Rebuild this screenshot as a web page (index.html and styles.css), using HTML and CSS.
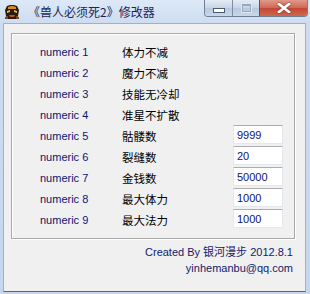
FILE: index.html
```html
<!DOCTYPE html>
<html lang="zh-CN">
<head>
    <meta charset="UTF-8">
    <meta name="viewport" content="width=device-width, initial-scale=1.0">
    <title>《兽人必须死2》修改器</title>
    <link rel="stylesheet" href="styles.css">
</head>
<body>
    <div class="window">
        <div class="titlebar">
            <svg class="app-icon" width="16" height="16" viewBox="0 0 16 16">
                <path d="M3 2 L6 1 L10 1 L13 2 L15 6 L14 12 L12 15 L4 15 L2 12 L1 6 Z" fill="#2a1a10"/>
                <path d="M4 3 L7 2 L9 2 L12 3 L12 5 L4 5 Z" fill="#d9891e"/>
                <path d="M3 7 L6 6 L6 8 L3 9 Z" fill="#f3b23a"/>
                <path d="M13 7 L10 6 L10 8 L13 9 Z" fill="#f3b23a"/>
                <path d="M5 11 L11 11 L10 13 L6 13 Z" fill="#b8561a"/>
                <path d="M1 13 L4 12 L4 15 L1 15 Z" fill="#7a4a20"/>
                <path d="M15 13 L12 12 L12 15 L15 15 Z" fill="#7a4a20"/>
            </svg>
            <span class="title">《兽人必须死2》修改器</span>
            <div class="caption-buttons">
                <span class="cap-btn cap-min"><i></i></span>
                <span class="cap-btn cap-max"><i></i></span>
                <span class="cap-btn cap-close">
                    <svg width="14" height="10" viewBox="0 0 14 10">
                        <path d="M2 1 L12 9 M12 1 L2 9" stroke="#fff" stroke-width="2.6" stroke-linecap="square"/>
                    </svg>
                </span>
            </div>
        </div>

        <div class="client">
            <div class="group">
                <div class="row"><span class="key">numeric 1</span><span class="name">体力不减</span></div>
                <div class="row"><span class="key">numeric 2</span><span class="name">魔力不减</span></div>
                <div class="row"><span class="key">numeric 3</span><span class="name">技能无冷却</span></div>
                <div class="row"><span class="key">numeric 4</span><span class="name">准星不扩散</span></div>
                <div class="row"><span class="key">numeric 5</span><span class="name">骷髅数</span><input class="value" type="text" value="9999"></div>
                <div class="row"><span class="key">numeric 6</span><span class="name">裂缝数</span><input class="value" type="text" value="20"></div>
                <div class="row"><span class="key">numeric 7</span><span class="name">金钱数</span><input class="value" type="text" value="50000"></div>
                <div class="row"><span class="key">numeric 8</span><span class="name">最大体力</span><input class="value" type="text" value="1000"></div>
                <div class="row"><span class="key">numeric 9</span><span class="name">最大法力</span><input class="value" type="text" value="1000"></div>
            </div>
            <div class="credits">
                <p>Created By 银河漫步 2012.8.1</p>
                <p>yinhemanbu@qq.com</p>
            </div>
        </div>
    </div>
</body>
</html>
```

FILE: styles.css
```css
body {
    margin: 0;
    background: #c4d7ee;
    font-family: "Liberation Sans", "Noto Sans CJK SC", sans-serif;
}

.window {
    width: 310px;
    height: 294px;
    display: flex;
    flex-direction: column;
    background: linear-gradient(#dde9f7, #cddcf0 23px, #c4d7ee);
    overflow: hidden;
}

.titlebar {
    height: 23px;
    display: flex;
    align-items: center;
    padding-left: 4px;
    flex-shrink: 0;
}

.app-icon {
    display: block;
    margin-top: 1px;
}

.title {
    margin-left: 8px;
    font-family: "Noto Sans CJK SC", sans-serif;
    font-size: 12px;
    color: #1e2458;
    white-space: nowrap;
}

.caption-buttons {
    margin-left: auto;
    margin-right: 2px;
    align-self: flex-start;
    display: flex;
    margin-top: -1px;
    border: 1px solid #6f7f98;
    border-top: none;
    border-radius: 0 0 4px 4px;
    overflow: hidden;
}

.cap-btn {
    height: 17px;
    display: flex;
    align-items: center;
    justify-content: center;
    background: linear-gradient(#e8eef7, #c9d6e7 50%, #b7c8de 51%, #c8d7ea);
}

.cap-min {
    width: 27px;
    border-right: 1px solid #7f8fa8;
}

.cap-min i {
    width: 10px;
    height: 3px;
    margin-top: 5px;
    background: #fff;
    border: 1px solid #4a5a72;
}

.cap-max {
    width: 26px;
    border-right: 1px solid #8a4040;
}

.cap-max i {
    width: 7px;
    height: 5px;
    border: 1px solid #9aa8bc;
    border-top-width: 2px;
    box-shadow: 0 0 0 1px #dfe7f2;
}

.cap-close {
    width: 47px;
    background: linear-gradient(#e3a091, #cf6a58 50%, #c24632 51%, #d2664e);
}

.cap-close svg {
    display: block;
    filter: drop-shadow(0 0 1px #7a2a20);
}

.client {
    flex: 1;
    margin: 0 4px 2px 3px;
    background: #f0f0f0;
    border: 1px solid #9fb1c8;
    border-bottom-color: #5c6470;
    display: flex;
    flex-direction: column;
}

.group {
    width: 284px;
    box-sizing: border-box;
    margin: 9px 0 0 7px;
    padding: 7px 0 8px 28px;
    border: 1px solid #a9a9a9;
    box-shadow: inset 1px 1px 0 #fff, 1px 1px 0 #fff;
}

.row {
    height: 21px;
    display: grid;
    grid-template-columns: 82px 111px 50px;
    align-items: center;
}

.key {
    font-size: 11px;
    color: #0d1470;
}

.name {
    font-family: "Noto Sans CJK SC", sans-serif;
    font-size: 11.5px;
    color: #000;
}

.value {
    width: 50px;
    height: 19px;
    box-sizing: border-box;
    margin: -2px 0 0;
    padding: 0 3px;
    border: 1px solid #e2e8ee;
    border-top-color: #abadb3;
    background: #fff;
    font-family: "Liberation Sans", sans-serif;
    font-size: 11px;
    color: #0d1470;
    outline: none;
}

.credits {
    margin-top: 5px;
    padding-right: 12px;
    text-align: right;
    color: #121a6a;
    font-size: 11px;
}

.credits p {
    margin: 0;
    line-height: 16px;
}
```
